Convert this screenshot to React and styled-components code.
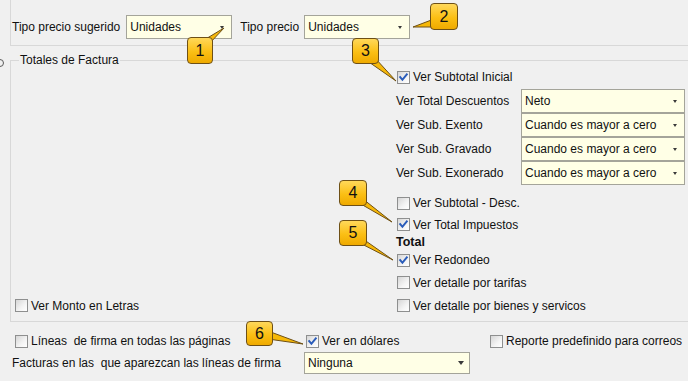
import React from "react";
import styled, { createGlobalStyle } from "styled-components";

const Global = createGlobalStyle`
  html, body { margin: 0; padding: 0; background: #f0f0f0; }
`;

const Root = styled.div`
  position: relative;
  width: 688px;
  height: 381px;
  overflow: hidden;
  background: #f0f0f0;
  font-family: "Liberation Sans", Arial, sans-serif;
  font-size: 12px;
  color: #111;
`;

const RadioEdge = styled.span`
  position: absolute;
  left: -4px;
  top: 59px;
  width: 8px;
  height: 8px;
  box-sizing: border-box;
  border: 1px solid #5a5a5a;
  border-radius: 50%;
`;

const TopPanel = styled.div`
  margin-left: 10px;
  height: 46px;
  box-sizing: border-box;
  border-left: 1px solid #d8d8d8;
  border-bottom: 1px solid #d8d8d8;
  padding: 15px 0 0 1px;
  display: flex;
  align-items: flex-start;
`;

const Label = styled.span`
  line-height: ${(p) => p.$lh || 24}px;
  margin-right: ${(p) => p.$mr || 0}px;
  white-space: nowrap;
  font-weight: ${(p) => (p.$bold ? 700 : 400)};
`;

const SelectBox = styled.div`
  width: ${(p) => p.$w}px;
  height: ${(p) => p.$h || 24}px;
  margin-right: ${(p) => p.$mr || 0}px;
  box-sizing: border-box;
  border: 1px solid #a4a49a;
  background: #ffffe6;
  display: flex;
  align-items: center;
  justify-content: space-between;
  padding: 0 ${(p) => p.$pr || 7}px 0 3px;
  white-space: nowrap;
`;

const Arrow = styled.span`
  width: 0;
  height: 0;
  border-left: ${(p) => p.$s}px solid transparent;
  border-right: ${(p) => p.$s}px solid transparent;
  border-top: ${(p) => p.$s + 0.5}px solid #3a3a3a;
`;

const GroupBox = styled.div`
  margin: 14px -20px 0 10px;
  border: 1px solid #d8d8d8;
  display: flex;
  flex-direction: column;
`;

const GroupTitle = styled.div`
  align-self: flex-start;
  margin: -8px 0 -2px 8px;
  padding: 0 1px;
  background: #f0f0f0;
  line-height: 14px;
`;

const GroupBody = styled.div`
  display: grid;
  grid-template-columns: 385px 1fr;
  padding-bottom: 4px;
`;

const LeftCol = styled.div`
  display: flex;
  flex-direction: column;
  justify-content: flex-end;
  padding-left: 4px;
`;

const RightCol = styled.div`
  display: flex;
  flex-direction: column;
`;

const CheckRow = styled.div`
  display: flex;
  align-items: center;
  gap: 3px;
  height: ${(p) => p.$h || 23}px;
  margin-top: ${(p) => p.$mt || 0}px;
  padding-left: ${(p) => p.$pl || 0}px;
  white-space: nowrap;
`;

const TitleRow = styled.div`
  height: ${(p) => p.$h}px;
  display: flex;
  align-items: center;
  font-weight: 700;
  font-size: 12.5px;
`;

const SelectRow = styled.div`
  display: grid;
  grid-template-columns: 125px 164px;
  height: 24px;
  align-items: center;
  white-space: nowrap;
`;

const Box = styled.span`
  width: 13px;
  height: 13px;
  flex: none;
  box-sizing: border-box;
  border: 1px solid #8e8f8f;
  background: linear-gradient(135deg, #d6d6d6 0%, #f4f4f4 60%, #ffffff 100%);
  display: flex;
  align-items: center;
  justify-content: center;
`;

const BottomArea = styled.div`
  padding-top: 8px;
`;

const BottomRow = styled.div`
  display: grid;
  grid-template-columns: ${(p) => p.$cols};
  padding-left: ${(p) => p.$pl}px;
  height: 22px;
  align-items: center;
  white-space: nowrap;
`;

const Overlay = styled.svg`
  position: absolute;
  left: 0;
  top: 0;
  pointer-events: none;
`;

const Callout = styled.div`
  position: absolute;
  left: ${(p) => p.$x}px;
  top: ${(p) => p.$y}px;
  width: ${(p) => p.$w || 27}px;
  height: ${(p) => p.$h || 26}px;
  box-sizing: border-box;
  border: 1px solid #6e5016;
  border-radius: 4px;
  background: linear-gradient(180deg, #ffd85a 0%, #fbbf14 55%, #efaa00 100%);
  display: flex;
  align-items: center;
  justify-content: center;
  font-size: 16px;
  color: #111;
  font-family: "Liberation Sans", Arial, sans-serif;
`;

function Check({ checked }) {
  return (
    <Box>
      {checked && (
        <svg width="11" height="11" viewBox="0 0 11 11">
          <path
            d="M2.2 5.2 L4.4 7.8 L8.8 2.4"
            fill="none"
            stroke="#2a5cba"
            strokeWidth="2"
            strokeLinecap="square"
          />
        </svg>
      )}
    </Box>
  );
}

function Select({ w, value, s = 2.5, pr, mr, h }) {
  return (
    <SelectBox $w={w} $pr={pr} $mr={mr} $h={h}>
      <span>{value}</span>
      <Arrow $s={s} />
    </SelectBox>
  );
}

const tails = [
  { tip: [224, 28], a: [199, 43], b: [209, 44] },
  { tip: [413, 27], a: [434, 19], b: [434, 27] },
  { tip: [396, 81], a: [366, 60], b: [375, 58] },
  { tip: [392, 222], a: [354, 200], b: [363, 199] },
  { tip: [393, 260], a: [354, 240], b: [363, 239] },
  { tip: [303, 344], a: [268, 331], b: [268, 339] },
];

const callouts = [
  { n: 1, x: 187, y: 37, w: 26, h: 27 },
  { n: 2, x: 430, y: 3, w: 28, h: 27 },
  { n: 3, x: 352, y: 38, w: 27, h: 26 },
  { n: 4, x: 339, y: 180, w: 28, h: 26 },
  { n: 5, x: 339, y: 220, w: 28, h: 26 },
  { n: 6, x: 246, y: 321, w: 27, h: 25 },
];

export default function App() {
  return (
    <Root>
      <Global />
      <RadioEdge />
      <TopPanel>
        <Label $mr={6}>Tipo precio sugerido</Label>
        <Select w={106} value="Unidades" mr={8} />
        <Label $mr={5}>Tipo precio</Label>
        <Select w={106} value="Unidades" />
      </TopPanel>

      <GroupBox>
        <GroupTitle>Totales de Factura</GroupTitle>
        <GroupBody>
          <LeftCol>
            <CheckRow $h={23}>
              <Check />
              <span>Ver Monto en Letras</span>
            </CheckRow>
          </LeftCol>
          <RightCol>
            <CheckRow $h={24} $pl={1}>
              <Check checked />
              <span>Ver Subtotal Inicial</span>
            </CheckRow>
            <SelectRow>
              <span>Ver Total Descuentos</span>
              <Select w={164} value="Neto" s={2.5} />
            </SelectRow>
            <SelectRow>
              <span>Ver Sub. Exento</span>
              <Select w={164} value="Cuando es mayor a cero" s={2.5} />
            </SelectRow>
            <SelectRow>
              <span>Ver Sub. Gravado</span>
              <Select w={164} value="Cuando es mayor a cero" s={2.5} />
            </SelectRow>
            <SelectRow>
              <span>Ver Sub. Exonerado</span>
              <Select w={164} value="Cuando es mayor a cero" s={2.5} />
            </SelectRow>
            <CheckRow $h={22} $mt={7} $pl={1}>
              <Check />
              <span>Ver Subtotal - Desc.</span>
            </CheckRow>
            <CheckRow $h={21} $pl={1}>
              <Check checked />
              <span>Ver Total Impuestos</span>
            </CheckRow>
            <TitleRow $h={14}>Total</TitleRow>
            <CheckRow $h={22} $pl={1}>
              <Check checked />
              <span>Ver Redondeo</span>
            </CheckRow>
            <CheckRow $h={23} $pl={1}>
              <Check />
              <span>Ver detalle por tarifas</span>
            </CheckRow>
            <CheckRow $h={23} $pl={1}>
              <Check />
              <span>Ver detalle por bienes y servicos</span>
            </CheckRow>
          </RightCol>
        </GroupBody>
      </GroupBox>

      <BottomArea>
        <BottomRow $cols="291px 184px 1fr" $pl={15}>
          <CheckRow $h={22}>
            <Check />
            <span>Líneas&nbsp; de firma en todas las páginas</span>
          </CheckRow>
          <CheckRow $h={22}>
            <Check checked />
            <span>Ver en dólares</span>
          </CheckRow>
          <CheckRow $h={22}>
            <Check />
            <span>Reporte predefinido para correos</span>
          </CheckRow>
        </BottomRow>
        <BottomRow $cols="292px 166px" $pl={12}>
          <span>Facturas en las&nbsp; que aparezcan las líneas de firma</span>
          <Select w={166} h={22} value="Ninguna" s={3.5} pr={5} />
        </BottomRow>
      </BottomArea>

      <Overlay width="688" height="381" viewBox="0 0 688 381">
        {tails.map((t, i) => (
          <polygon
            key={i}
            points={`${t.a[0]},${t.a[1]} ${t.tip[0]},${t.tip[1]} ${t.b[0]},${t.b[1]}`}
            fill="#f6b808"
            stroke="#6e5016"
            strokeWidth="1"
            strokeLinejoin="miter"
          />
        ))}
      </Overlay>
      {callouts.map((c) => (
        <Callout key={c.n} $x={c.x} $y={c.y} $w={c.w} $h={c.h}>
          {c.n}
        </Callout>
      ))}
    </Root>
  );
}
